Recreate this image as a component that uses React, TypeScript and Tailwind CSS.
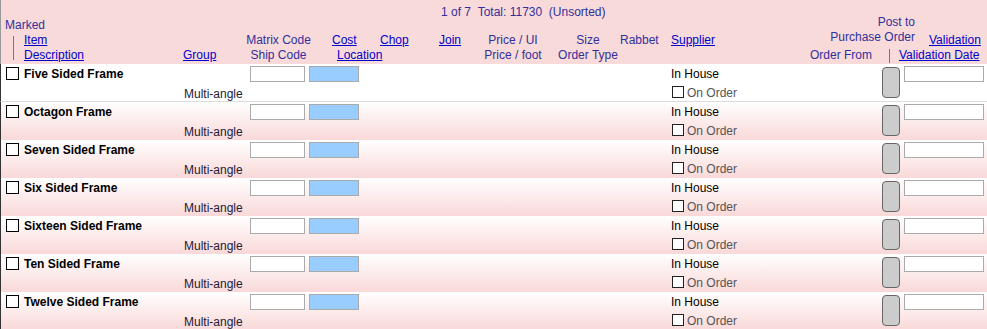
const items = [
  "Five Sided Frame",
  "Octagon Frame",
  "Seven Sided Frame",
  "Six Sided Frame",
  "Sixteen Sided Frame",
  "Ten Sided Frame",
  "Twelve Sided Frame",
];

const Link = ({ children }: { children: React.ReactNode }) => (
  <a href="#" className="text-[#0000cc] underline whitespace-nowrap">
    {children}
  </a>
);

const Header = () => (
  <div className="bg-[#f9dada] border-l border-[#999] h-[64px] flex flex-col text-[#30309a]">
    <div className="h-[19px] pl-[440px] pt-[5px] leading-[14px] whitespace-nowrap">
      1 of 7&nbsp;&nbsp;Total: 11730&nbsp;&nbsp;(Unsorted)
    </div>
    <div className="flex items-end h-[45px] pb-[1px] leading-[15px] whitespace-nowrap">
      {/* Marked / Item / Description */}
      <div className="w-[179px] flex flex-col">
        <div className="pl-[4px] leading-[13px] mb-[1px]">Marked</div>
        <div className="flex">
          <div className="ml-[12px] mt-[3px] w-px h-[24px] bg-[#777]" />
          <div className="ml-[10px] flex flex-col">
            <Link>Item</Link>
            <Link>Description</Link>
          </div>
        </div>
      </div>
      <div className="w-[66px] pl-[3px]">
        <Link>Group</Link>
      </div>
      <div className="w-[65px] flex flex-col text-center">
        <span>Matrix Code</span>
        <span>Ship Code</span>
      </div>
      <div className="w-[69px] flex flex-col items-start">
        <span className="pl-[21px]">
          <Link>Cost</Link>
        </span>
        <span className="pl-[26px]">
          <Link>Location</Link>
        </span>
      </div>
      <div className="w-[59px] flex flex-col">
        <Link>Chop</Link>
        <div className="h-[15px]" />
      </div>
      <div className="w-[45px] flex flex-col">
        <Link>Join</Link>
        <div className="h-[15px]" />
      </div>
      <div className="w-[58px] flex flex-col text-center">
        <span>Price / UI</span>
        <span>Price / foot</span>
      </div>
      <div className="w-[78px] pl-[14px] flex flex-col text-center">
        <span>Size</span>
        <span>Order Type</span>
      </div>
      <div className="w-[51px] flex flex-col">
        <span>Rabbet</span>
        <div className="h-[15px]" />
      </div>
      <div className="w-[139px] flex flex-col">
        <Link>Supplier</Link>
        <div className="h-[15px]" />
      </div>
      <div className="w-[110px] flex flex-col">
        <span className="text-right pr-[5px]">Post to</span>
        <span className="text-right pr-[5px] mb-[3px]">Purchase Order</span>
        <div className="flex items-center">
          <span>Order From</span>
          <div className="ml-[17px] w-px h-[14px] bg-[#777]" />
        </div>
      </div>
      <div className="w-[67px] flex flex-col">
        <span className="pl-[9px]">
          <Link>Validation</Link>
        </span>
        <span className="ml-[-21px]">
          <Link>Validation Date</Link>
        </span>
      </div>
    </div>
  </div>
);

const Row = ({ name, first }: { name: string; first: boolean }) => (
  <div
    className={`flex h-[38px] border-l border-[#333] ${
      first
        ? "bg-white border-b border-b-[#dddddd]"
        : "bg-linear-to-b from-white to-[#f9d8d8]"
    }`}
  >
    <div className="w-[179px] flex items-start pt-[3px]">
      <span className="ml-[5px] w-[13px] h-[13px] border border-black bg-white shrink-0" />
      <span className="ml-[5px] mt-[1px] font-bold leading-[13px] text-black whitespace-nowrap">
        {name}
      </span>
    </div>
    <div className="w-[66px] pl-[4px] pt-[23px] leading-[14px] text-[#20203a] whitespace-nowrap">
      Multi-angle
    </div>
    <div className="w-[63px] pl-[4px] pt-[2px]">
      <div className="w-[55px] h-[16px] border border-[#aaa] bg-white" />
    </div>
    <div className="w-[362px] pt-[2px]">
      <div className="w-[50px] h-[16px] border border-[#aaa] bg-[#99ccff]" />
    </div>
    <div className="w-[211px] flex flex-col">
      <span className="mt-[3px] leading-[14px] text-black">In House</span>
      <div className="mt-[5px] flex items-center h-[12px]">
        <span className="ml-[1px] block w-[12px] h-[12px] shrink-0 border border-[#222] bg-white" />
        <span className="ml-[3px] mt-[2px] text-[#555] leading-[14px] whitespace-nowrap">
          On Order
        </span>
      </div>
    </div>
    <div className="w-[22px] pt-[3px]">
      <div className="w-[18px] h-[31px] rounded-[4px] bg-[#cccccc] border border-[#666]" />
    </div>
    <div className="pt-[2px]">
      <div className="w-[80px] h-[16px] border border-[#aaa] bg-white" />
    </div>
  </div>
);

export default function App() {
  return (
    <div className="w-[987px] h-[329px] overflow-hidden bg-white text-[12px] font-['Liberation_Sans',Arial,sans-serif]">
      <Header />
      {items.map((name, i) => (
        <Row key={name} name={name} first={i === 0} />
      ))}
    </div>
  );
}
